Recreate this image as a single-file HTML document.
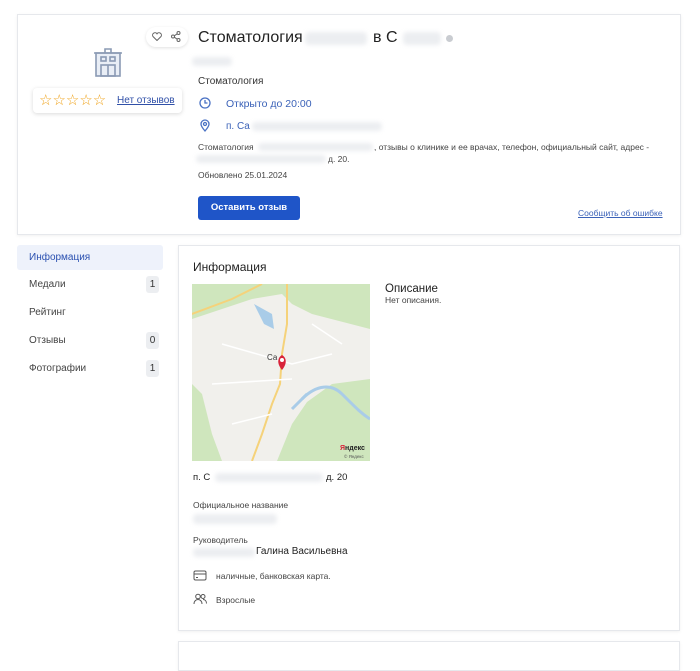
<!DOCTYPE html>
<html><head><meta charset="utf-8"><style>
*{margin:0;padding:0;box-sizing:border-box}
body{width:700px;height:654px;background:#fff;font-family:"Liberation Sans",sans-serif;color:#222;position:relative;overflow:hidden}
.a{position:absolute}
.card{position:absolute;background:#fff;border:1px solid #e6e8ec;box-shadow:0 1px 3px rgba(0,0,0,.06)}
.blur{position:absolute;background:#eceef1;border-radius:4px;filter:blur(2px)}
.t{position:absolute;white-space:nowrap}
.nav{position:absolute;left:17px;width:146px;height:25px;font-size:10px;color:#444;padding-left:12px;line-height:25px}
.badge{position:absolute;right:4px;top:4px;width:13px;height:17px;background:#eceef1;border-radius:3px;font-size:10px;text-align:center;line-height:17px;color:#333}
</style></head><body>

<div class="card" style="left:17px;top:14px;width:664px;height:221px"></div>
<svg class="a" style="left:94px;top:47px" width="28" height="30" viewBox="0 0 28 30" fill="none" stroke="#8a9ab4" stroke-width="1.6">
<rect x="2" y="6" width="24" height="23" fill="#e9eef6"/><line x1="0" y1="6" x2="28" y2="6"/><path d="M11 6V2h6v4"/>
<rect x="7" y="10" width="5" height="4"/><rect x="16" y="10" width="5" height="4"/><rect x="7" y="18" width="14" height="11"/><line x1="14" y1="18" x2="14" y2="29"/></svg>
<div class="a" style="left:146px;top:27px;width:42px;height:20px;background:#fff;border-radius:10px;box-shadow:0 1px 3px rgba(0,0,0,.12)"></div>
<svg class="a" style="left:152px;top:32px" width="10" height="9" viewBox="0 0 10 9"><path d="M5 8.5L1 4.5A2.2 2.2 0 0 1 5 1.8A2.2 2.2 0 0 1 9 4.5Z" fill="none" stroke="#666" stroke-width="1"/></svg>
<svg class="a" style="left:171px;top:31px" width="10" height="11" viewBox="0 0 10 11" fill="none" stroke="#666" stroke-width="1"><circle cx="7.5" cy="2" r="1.5"/><circle cx="2" cy="5.5" r="1.5"/><circle cx="7.5" cy="9" r="1.5"/><path d="M3.3 4.8L6.2 2.8M3.3 6.2L6.2 8.2"/></svg>
<div class="a" style="left:33px;top:88px;width:149px;height:25px;background:#fff;border-radius:4px;box-shadow:0 1px 4px rgba(0,0,0,.15)"></div>
<div class="t" style="left:39px;top:91px;font-size:15px;color:#f0a41d;letter-spacing:0px">☆☆☆☆☆</div>
<div class="t" style="left:117px;top:95px;font-size:10px;color:#3050a8;text-decoration:underline">Нет отзывов</div>

<div class="t" style="left:198px;top:29px;font-size:16px;color:#222">Стоматология</div>
<div class="blur" style="left:305px;top:32px;width:62px;height:13px"></div>
<div class="t" style="left:373px;top:29px;font-size:16px">в С</div>
<div class="blur" style="left:403px;top:32px;width:38px;height:13px"></div>
<div class="a" style="left:446px;top:35px;width:7px;height:7px;border-radius:50%;background:#c9ccd1"></div>
<div class="blur" style="left:192px;top:57px;width:40px;height:9px"></div>
<div class="t" style="left:198px;top:76px;font-size:10px;color:#333">Стоматология</div>
<svg class="a" style="left:199px;top:97px" width="12" height="12" viewBox="0 0 12 12" fill="none" stroke="#4a72c4" stroke-width="1.3"><circle cx="6" cy="6" r="5"/><path d="M6 3v3h2.5"/></svg>
<div class="t" style="left:226px;top:98px;font-size:10.5px;color:#3b62b8">Открыто до 20:00</div>
<svg class="a" style="left:200px;top:119px" width="10" height="13" viewBox="0 0 10 13" fill="none" stroke="#4a72c4" stroke-width="1.3"><path d="M5 12C2 8.5 1 6.5 1 5a4 4 0 0 1 8 0c0 1.5-1 3.5-4 7z"/><circle cx="5" cy="5" r="1.5"/></svg>
<div class="t" style="left:226px;top:121px;font-size:10px;color:#3b62b8">п. Са</div>
<div class="blur" style="left:252px;top:122px;width:130px;height:9px"></div>
<div class="t" style="left:198px;top:142px;font-size:8.5px;color:#444">Стоматология</div>
<div class="blur" style="left:258px;top:143px;width:115px;height:8px"></div>
<div class="t" style="left:374px;top:142px;font-size:8.5px;color:#444">, отзывы о клинике и ее врачах, телефон, официальный сайт, адрес -</div>
<div class="blur" style="left:196px;top:155px;width:130px;height:8px"></div>
<div class="t" style="left:328px;top:154px;font-size:8.5px;color:#444">д. 20.</div>
<div class="t" style="left:198px;top:170px;font-size:8.5px;color:#444">Обновлено 25.01.2024</div>
<div class="a" style="left:198px;top:196px;width:102px;height:24px;background:#1f55c8;border-radius:3px;color:#fff;font-size:9.5px;font-weight:bold;text-align:center;line-height:24px">Оставить отзыв</div>
<div class="t" style="left:578px;top:208px;font-size:8.5px;color:#3b62b8;text-decoration:underline">Сообщить об ошибке</div>

<div class="nav" style="top:245px;background:#eef2fb;color:#2a50b0;border-radius:3px">Информация</div>
<div class="nav" style="top:272px">Медали<div class="badge">1</div></div>
<div class="nav" style="top:300px">Рейтинг</div>
<div class="nav" style="top:328px">Отзывы<div class="badge">0</div></div>
<div class="nav" style="top:356px">Фотографии<div class="badge">1</div></div>

<div class="card" style="left:178px;top:245px;width:502px;height:386px"></div>
<div class="card" style="left:178px;top:641px;width:502px;height:30px"></div>
<div class="t" style="left:193px;top:260px;font-size:12px;color:#222">Информация</div>
<svg class="a" style="left:192px;top:284px" width="178" height="177" viewBox="0 0 178 177">
<rect width="178" height="177" fill="#cfe6bd"/>
<path d="M0 35 60 15 90 10 100 20 120 30 178 45V95L140 100 115 118 100 140 85 177H30L20 150 10 110 0 100Z" fill="#f1f0ec"/>
<path d="M110 115C125 100 140 100 150 110 165 125 170 130 178 135" stroke="#a9cce8" stroke-width="3" fill="none"/>
<path d="M100 125 115 110" stroke="#a9cce8" stroke-width="3" fill="none"/>
<path d="M62 20 72 40 82 45 80 30Z" fill="#a9cce8"/>
<path d="M0 30 40 15 70 0M95 0 95 40 90 70 88 100 80 120 70 150 60 177" stroke="#f5d27a" stroke-width="2" fill="none"/>
<path d="M30 60 100 80 140 70M20 100 100 95M40 140 80 130M150 60 120 40" stroke="#fff" stroke-width="1.5" fill="none"/>
<text x="75" y="76" font-size="8" fill="#333" font-family="Liberation Sans">Са</text>
<path d="M90 88C85 82 85 76 90 73 95 76 95 82 90 88Z" fill="#d8233a" transform="translate(0 -2)"/>
<circle cx="90" cy="76" r="2" fill="#fff"/>
<text x="148" y="166" font-size="7" fill="#d8233a" font-weight="bold" font-family="Liberation Sans">Я<tspan fill="#222">ндекс</tspan></text>
<text x="152" y="174" font-size="4.5" fill="#555" font-family="Liberation Sans">© Яндекс</text>
</svg>
<div class="t" style="left:385px;top:283px;font-size:11.5px;color:#222">Описание</div>
<div class="t" style="left:385px;top:295px;font-size:8.5px;color:#444">Нет описания.</div>
<div class="t" style="left:193px;top:472px;font-size:9.5px;color:#222">п. С</div>
<div class="blur" style="left:215px;top:473px;width:108px;height:9px"></div>
<div class="t" style="left:326px;top:472px;font-size:9.5px;color:#222">д. 20</div>
<div class="t" style="left:193px;top:500px;font-size:8.5px;color:#444">Официальное название</div>
<div class="blur" style="left:193px;top:514px;width:84px;height:10px"></div>
<div class="t" style="left:193px;top:535px;font-size:8.5px;color:#444">Руководитель</div>
<div class="blur" style="left:193px;top:548px;width:62px;height:9px"></div>
<div class="t" style="left:256px;top:546px;font-size:10px;color:#222">Галина Васильевна</div>
<svg class="a" style="left:193px;top:570px" width="14" height="11" viewBox="0 0 14 11" fill="none" stroke="#555" stroke-width="1"><rect x="1" y="1" width="12" height="9" rx="1.5"/><line x1="1" y1="4" x2="13" y2="4"/><line x1="3" y1="7.5" x2="5" y2="7.5"/></svg>
<div class="t" style="left:216px;top:571px;font-size:8.5px;color:#444">наличные, банковская карта.</div>
<svg class="a" style="left:193px;top:593px" width="14" height="12" viewBox="0 0 14 12" fill="none" stroke="#555" stroke-width="1"><circle cx="5" cy="3.5" r="2.3"/><circle cx="10" cy="3.5" r="2"/><path d="M1 11c0-3 2-4.5 4-4.5s4 1.5 4 4.5M10 6.5c2 0 3.5 1.5 3.5 4"/></svg>
<div class="t" style="left:216px;top:595px;font-size:8.5px;color:#444">Взрослые</div>
</body></html>
